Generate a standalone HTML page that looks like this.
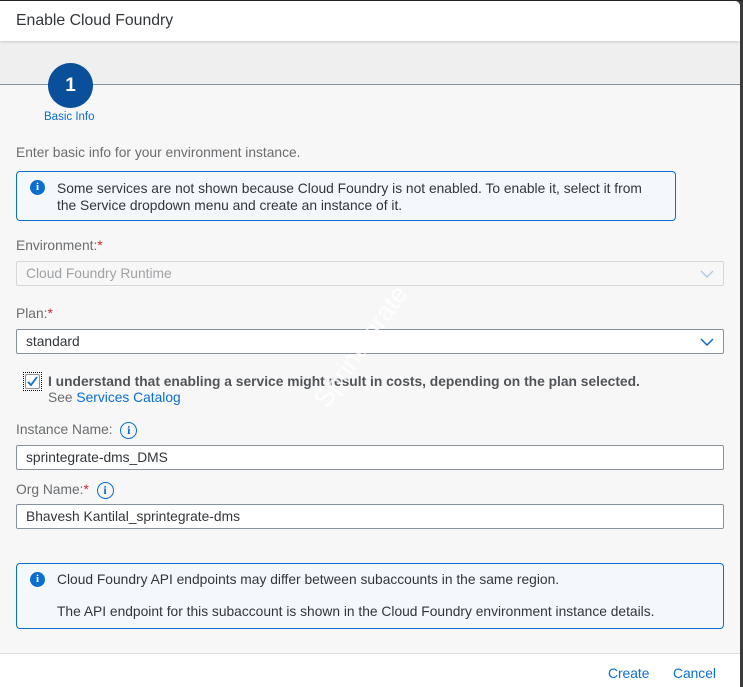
<!DOCTYPE html>
<html><head><style>
*{box-sizing:border-box;margin:0;padding:0}
body{width:743px;height:687px;background:#3a3a3a;font-family:"Liberation Sans",sans-serif;font-size:13.8px;color:#32363a;position:relative;overflow:hidden}
.dlg{position:absolute;left:0;top:1px;width:740px;height:686px;background:#f7f7f7;border-radius:0 5px 0 0;overflow:hidden}
.hdr{position:absolute;left:0;top:0;width:100%;height:40px;background:#fff;box-shadow:0 1px 3px rgba(0,0,0,.15);font-size:15.8px;padding:11px 16px;z-index:2}
.band{position:absolute;left:0;top:40px;width:100%;height:44px;background:#efefef;border-bottom:1px solid #89919a}
.circ{position:absolute;left:48px;top:62px;width:45px;height:45px;border-radius:50%;background:#0a4f9a;color:#fff;font-size:19px;font-weight:bold;text-align:center;line-height:45px;z-index:3}
.a{position:absolute;white-space:nowrap}
.lbl{color:#6a6d70}
.blue{color:#0a6ed1}
.info{position:absolute;background:#f4f8fc;border:1px solid #0a6ed1;border-radius:4px}
.ic{position:absolute;width:15px;height:15px;border-radius:50%;background:#0a6ed1;color:#fff;font-size:11px;font-weight:bold;text-align:center;line-height:15px;font-family:"Liberation Serif",serif}
.inp{position:absolute;left:16px;width:708px;height:25px;background:#fff;border:1px solid #89919a;border-radius:2px;padding:4px 9px;color:#32363a}
.oi{display:inline-block;width:17px;height:17px;border:1.5px solid #0a6ed1;border-radius:50%;color:#0a6ed1;font-family:"Liberation Serif",serif;font-size:12px;font-weight:bold;text-align:center;line-height:14px;vertical-align:middle}
.req{color:#d9262c}
.ftr{position:absolute;left:0;top:652px;width:100%;height:40px;background:#fff;border-top:1px solid #dcdcdc}
</style></head><body>
<div style="position:absolute;left:0;top:0;width:743px;height:1px;background:#222"></div>
<div class="dlg">
<div class="hdr">Enable Cloud Foundry</div>
<div class="band"></div>
<div class="circ">1</div>
<div class="a blue" style="left:44px;top:110px;font-size:11.5px">Basic Info</div>
<div class="a lbl" style="left:16px;top:144px">Enter basic info for your environment instance.</div>
<div class="info" style="left:16px;top:170px;width:660px;height:50px">
<div class="ic" style="left:13px;top:8px">i</div>
<div class="a" style="left:40px;top:8px;line-height:17px">Some services are not shown because Cloud Foundry is not enabled. To enable it, select it from<br>the Service dropdown menu and create an instance of it.</div>
</div>
<div class="a lbl" style="left:16px;top:237px">Environment:<span class="req">*</span></div>
<div class="inp" style="top:260px;background:#f7f7f7;border-color:#d5d8da;color:#a0a3a6">Cloud Foundry Runtime
<svg style="position:absolute;right:9px;top:8px" width="14" height="8"><path d="M1 1l6 6 6-6" fill="none" stroke="#a9c8ea" stroke-width="1.3"/></svg></div>
<div class="a lbl" style="left:16px;top:305px">Plan:<span class="req">*</span></div>
<div class="inp" style="top:328px">standard
<svg style="position:absolute;right:9px;top:8px" width="14" height="8"><path d="M1 1l6 6 6-6" fill="none" stroke="#0a6ed1" stroke-width="1.5"/></svg></div>
<div style="position:absolute;left:23px;top:371px;width:19px;height:19px;border:1px dotted #000;padding:1px"><div style="width:15px;height:15px;border:1px solid #89919a;background:#fff;border-radius:2px"><svg width="13" height="13"><path d="M2 7l3 3 6-8" fill="none" stroke="#0a6ed1" stroke-width="1.8"/></svg></div></div>
<div class="a" style="left:48px;top:373px;font-weight:bold;color:#515559">I understand that enabling a service might result in costs, depending on the plan selected.</div>
<div class="a lbl" style="left:48px;top:389px">See <span class="blue">Services Catalog</span></div>
<div class="a lbl" style="left:16px;top:421px">Instance Name:&nbsp; <span class="oi">i</span></div>
<div class="inp" style="top:444px">sprintegrate-dms_DMS</div>
<div class="a lbl" style="left:16px;top:481px">Org Name:<span class="req">*</span>&nbsp; <span class="oi">i</span></div>
<div class="inp" style="top:503px">Bhavesh Kantilal_sprintegrate-dms</div>
<div class="info" style="left:16px;top:562px;width:708px;height:66px">
<div class="ic" style="left:13px;top:8px">i</div>
<div class="a" style="left:40px;top:8px">Cloud Foundry API endpoints may differ between subaccounts in the same region.</div>
<div class="a" style="left:40px;top:40px">The API endpoint for this subaccount is shown in the Cloud Foundry environment instance details.</div>
</div>
<div class="a" style="left:290px;top:330px;font-size:26px;color:rgba(255,255,255,.8);transform:rotate(-55deg);transform-origin:center">Sprintegrate</div>
<div class="ftr">
<div class="a blue" style="left:608px;top:12px">Create</div>
<div class="a blue" style="left:673px;top:12px">Cancel</div>
</div>
</div>
</body></html>
